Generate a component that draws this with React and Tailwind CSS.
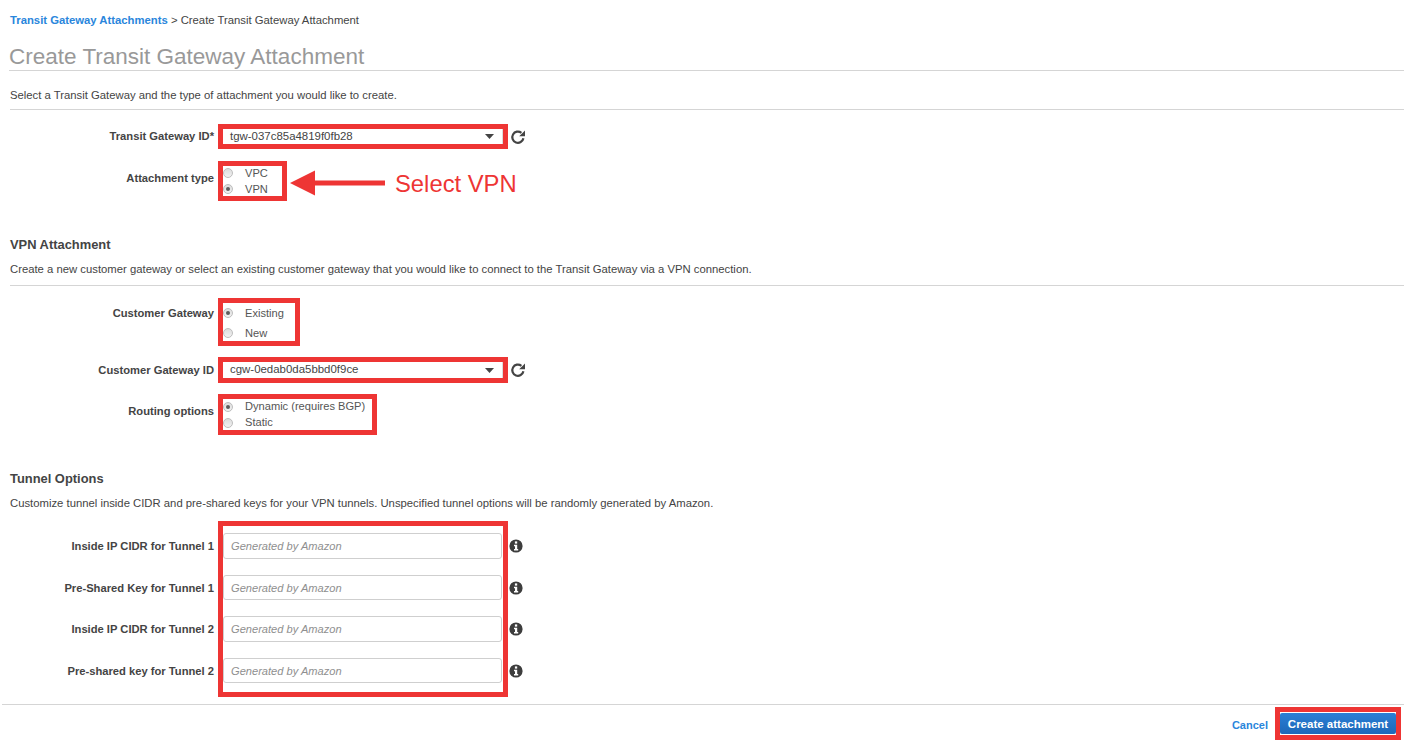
import React from "react";

const Line = ({ className = "" }) => <div className={`h-px bg-[#d5d5d5] ${className}`} />;

const Radio = ({ on }) => (
  <span className="w-[10px] h-[10px] rounded-full border border-[#bdbdbd] bg-gradient-to-b from-[#dcdcdc] to-[#f2f2f2] flex items-center justify-center shrink-0">
    {on && <span className="w-[4px] h-[4px] rounded-full bg-[#5c5c5c]" />}
  </span>
);

const RadioRow = ({ on, label }) => (
  <div className="flex items-center h-[16px]">
    <Radio on={on} />
    <span className="ml-[12px] text-[11.1px] text-[#555] whitespace-nowrap">{label}</span>
  </div>
);

const Label = ({ children, className = "" }) => (
  <div className={`w-[214px] shrink-0 text-right text-[11.2px] font-bold text-[#444] whitespace-nowrap ${className}`}>{children}</div>
);

const Refresh = () => (
  <svg width="16" height="16" viewBox="0 0 16 16" className="ml-[2px] shrink-0" fill="none">
    <path d="M13.4 9.2A5.6 5.6 0 1 1 11.4 3.8" stroke="#444" strokeWidth="2.2" />
    <path d="M15 1.4V7.2H9.2Z" fill="#444" />
  </svg>
);

const Caret = () => (
  <svg width="9" height="5" viewBox="0 0 9 5" className="shrink-0"><path d="M0 0H9L4.5 5Z" fill="#444" /></svg>
);

const SelectBox = ({ value }) => (
  <div className="ml-[4px] w-[290px] h-full border-[5px] border-[#ee3534] bg-white">
    <div className="h-full flex items-center justify-between pl-[7px] pr-[8px] border-r border-[#dcdcdc]">
      <span className="text-[11.45px] text-[#444]">{value}</span>
      <Caret />
    </div>
  </div>
);

const Info = () => (
  <svg width="14" height="14" viewBox="0 0 14 14" className="shrink-0">
    <circle cx="7" cy="7" r="6.6" fill="#3d3d3d" />
    <rect x="5.9" y="2.4" width="2.3" height="2.2" fill="#fff" />
    <path d="M5 5.8H8.2V10H9.2V11.4H5V10H6V7.2H5Z" fill="#fff" />
  </svg>
);

const tunnels = [
  { label: "Inside IP CIDR for Tunnel 1", h: "h-[26px]", mt: "mt-[12px]", pad: "" },
  { label: "Pre-Shared Key for Tunnel 1", h: "h-[25px]", mt: "mt-[16px]", pad: "pt-[1px]" },
  { label: "Inside IP CIDR for Tunnel 2", h: "h-[26px]", mt: "mt-[16px]", pad: "" },
  { label: "Pre-shared key for Tunnel 2", h: "h-[25px]", mt: "mt-[16px]", pad: "pt-[1px]" },
];

export default function App() {
  return (
    <div className="w-[1414px] h-[752px] overflow-hidden bg-white font-['Liberation_Sans',Arial,sans-serif] text-[#444] flex flex-col">
      <div className="h-[40px] pt-[13px] pl-[10px] text-[11.3px] leading-[14px] whitespace-nowrap">
        <span className="font-bold text-[#2a86dc]">Transit Gateway Attachments</span>
        <span className="text-[#444]"> &gt; Create Transit Gateway Attachment</span>
      </div>

      <div className="h-[30px] pl-[9px] text-[22.5px] leading-[33px] text-[#999] whitespace-nowrap">Create Transit Gateway Attachment</div>
      <Line className="ml-[9px] w-[1395px]" />

      <div className="h-[38px] pl-[10px] pt-[17px] text-[11.3px] leading-[14px] text-[#444]">
        Select a Transit Gateway and the type of attachment you would like to create.
      </div>
      <Line className="ml-[10px] w-[1394px]" />

      <div className="flex items-center h-[25px] mt-[14px]">
        <Label>Transit Gateway ID*</Label>
        <SelectBox value="tgw-037c85a4819f0fb28" />
        <Refresh />
      </div>

      <div className="flex items-center h-[40px] mt-[12px]">
        <Label className="mb-[6px]">Attachment type</Label>
        <div className="ml-[4px] w-[69px] h-full border-[5px] border-[#ee3534] flex flex-col justify-center">
          <RadioRow label="VPC" />
          <RadioRow on label="VPN" />
        </div>
        <svg width="95" height="26" viewBox="0 0 95 26" className="ml-[3px] mt-[4px] shrink-0">
          <path d="M0 13L25 0.5V10.5H95V15.5H25V25.5Z" fill="#ee3534" />
        </svg>
        <span className="ml-[10px] mt-[6px] text-[23.8px] text-[#ee3534] whitespace-nowrap">Select VPN</span>
      </div>

      <div className="mt-[36px] pl-[10px] h-[16px] text-[12.9px] leading-[16px] font-bold text-[#444]">VPN Attachment</div>
      <div className="mt-[8px] pl-[10px] h-[16px] text-[11.3px] leading-[16px] text-[#444] whitespace-nowrap">
        Create a new customer gateway or select an existing customer gateway that you would like to connect to the Transit Gateway via a VPN connection.
      </div>
      <Line className="mt-[8px] ml-[10px] w-[1394px]" />

      <div className="flex items-start h-[48px] mt-[12px]">
        <div className="pt-[7px]"><Label>Customer Gateway</Label></div>
        <div className="ml-[4px] w-[82px] h-full border-[5px] border-[#ee3534] flex flex-col gap-[4px] pt-[2px]">
          <RadioRow on label="Existing" />
          <RadioRow label="New" />
        </div>
      </div>

      <div className="flex items-center h-[26px] mt-[11px]">
        <Label>Customer Gateway ID</Label>
        <SelectBox value="cgw-0edab0da5bbd0f9ce" />
        <Refresh />
      </div>

      <div className="flex items-center h-[41px] mt-[11px]">
        <Label className="mb-[6px]">Routing options</Label>
        <div className="ml-[4px] w-[159px] h-full border-[5px] border-[#ee3534] flex flex-col justify-center">
          <RadioRow on label="Dynamic (requires BGP)" />
          <RadioRow label="Static" />
        </div>
      </div>

      <div className="mt-[36px] pl-[10px] h-[16px] text-[12.9px] leading-[16px] font-bold text-[#444]">Tunnel Options</div>
      <div className="mt-[8px] pl-[10px] h-[16px] text-[11.3px] leading-[16px] text-[#444] whitespace-nowrap">
        Customize tunnel inside CIDR and pre-shared keys for your VPN tunnels. Unspecified tunnel options will be randomly generated by Amazon.
      </div>

      <div className="flex h-[176px] mt-[10px]">
        <div className="w-[214px] shrink-0 flex flex-col">
          {tunnels.map((t) => (
            <div key={t.label} className={`${t.h} ${t.mt} ${t.pad} flex items-center justify-end text-[11.2px] font-bold text-[#444] whitespace-nowrap`}>{t.label}</div>
          ))}
        </div>
        <div className="ml-[4px] w-[290px] h-full border-[5px] border-[#ee3534] flex flex-col">
          <div className="h-[7px] shrink-0" />
          {tunnels.map((t, i) => (
            <div key={t.label} className={i === 0 ? "" : "mt-[16px]"}>
              <div className={`w-[279px] ${t.h} ${t.pad} border border-[#cfcfcf] rounded-[3px] bg-white flex items-center pl-[7px]`}>
                <span className="text-[11.1px] italic text-[#8f8f8f]">Generated by Amazon</span>
              </div>
            </div>
          ))}
        </div>
        <div className="ml-[1px] flex flex-col">
          {tunnels.map((t) => (
            <div key={t.label} className={`${t.h} ${t.mt} flex items-center`}><Info /></div>
          ))}
        </div>
      </div>

      <Line className="mt-[7px] ml-[2px] w-[1402px]" />

      <div className="flex items-start justify-end h-[33px] mt-[2px] pr-[13px]">
        <span className="text-[11px] font-bold text-[#2a86dc] mr-[7px] mt-[10px]">Cancel</span>
        <div className="w-[126px] h-full border-[5px] border-[#ee3534] bg-white pt-[1px]">
          <div className="h-[21px] pt-[2px] bg-gradient-to-b from-[#2a7fd6] to-[#1d68b8] rounded-[2px] flex items-center justify-center text-[11.5px] font-bold text-white whitespace-nowrap">Create attachment</div>
        </div>
      </div>
    </div>
  );
}
